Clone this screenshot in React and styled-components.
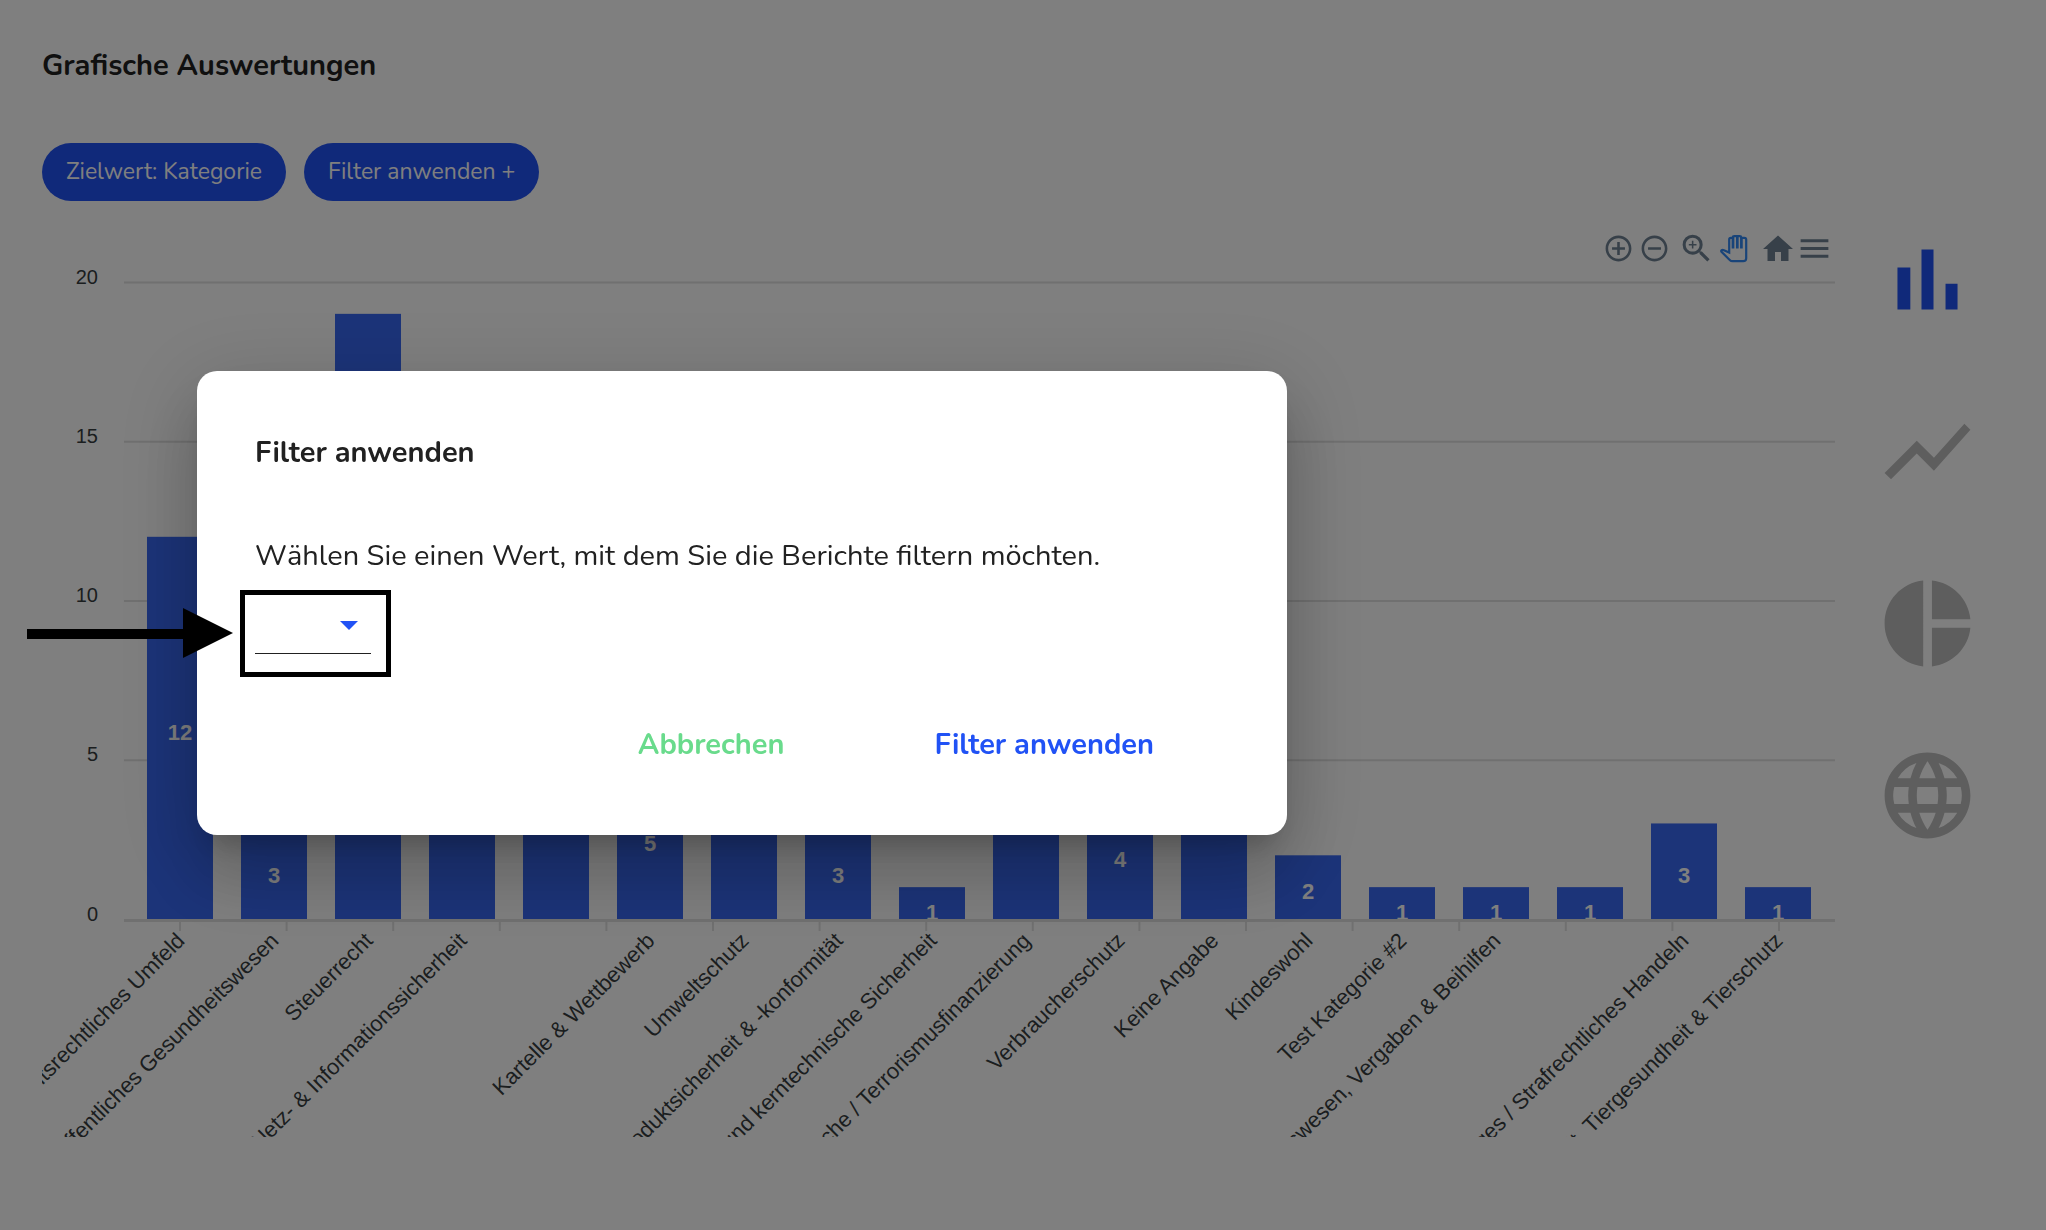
import React, { useState } from 'react';
import styled, { createGlobalStyle } from 'styled-components';
import {
  MdAddCircleOutline,
  MdHome,
  MdLanguage,
  MdMenu,
  MdPieChart,
  MdRemoveCircleOutline,
  MdShowChart,
  MdZoomIn,
} from 'react-icons/md';

const GlobalStyle = createGlobalStyle`
  * {
    box-sizing: border-box;
  }

  body {
    margin: 0;
    background: #ffffff;
    color: #212121;
    font-family: Nunito, 'Open Sans', sans-serif;
  }

  button,
  select {
    font-family: inherit;
  }
`;

const Page = styled.main`
  min-height: 100vh;
  padding: 46px 67px 40px 42px;
`;

const Heading = styled.h1`
  margin: 0;
  font-size: 29px;
  line-height: 40px;
  font-weight: 700;
`;

const ChipRow = styled.div`
  display: flex;
  gap: 18px;
  margin-top: 57px;
`;

const Chip = styled.button`
  height: 58px;
  padding: 0 24px 2px;
  border: none;
  border-radius: 29px;
  background: #2152f5;
  color: #ffffff;
  font-size: 23px;
  cursor: pointer;
`;

const Content = styled.div`
  display: flex;
  align-items: flex-start;
  gap: 32px;
  margin-top: 27px;
`;

const ChartColumn = styled.section`
  flex: 1;
  min-width: 0;
`;

const Toolbar = styled.div`
  display: flex;
  align-items: center;
  justify-content: flex-end;
  height: 41px;
  padding-right: 11px;
`;

const ToolButton = styled.button`
  display: flex;
  margin: 0 0 0 ${({ $space }) => $space || 0}px;
  padding: 0;
  border: none;
  background: none;
  color: ${({ $active }) => ($active ? '#3288f2' : '#6e8192')};
  cursor: pointer;
`;

const ChartSvg = styled.svg`
  display: block;
  width: 100%;
  overflow: hidden;
  font-family: Helvetica, 'Liberation Sans', Arial, sans-serif;
`;

const AxisText = styled.text`
  fill: #373d3f;
  font-size: ${({ $size }) => $size}px;
  text-anchor: end;
`;

const ValueText = styled.text`
  fill: #ffffff;
  font-size: 22px;
  font-weight: 600;
  text-anchor: middle;
`;

const ChartTypes = styled.nav`
  display: flex;
  flex-direction: column;
  gap: 69px;
`;

const TypeButton = styled.button`
  display: flex;
  padding: 0;
  border: none;
  background: none;
  color: ${({ $active }) => ($active ? '#2152f5' : '#bdbdbd')};
  cursor: pointer;
`;

const Backdrop = styled.div`
  position: fixed;
  inset: 0;
  padding: 371px 0 0 197px;
  background: rgba(0, 0, 0, 0.5);
`;

const Dialog = styled.div`
  width: 1090px;
  max-width: 100%;
  padding: 62px 58px 70px;
  border-radius: 20px;
  background: #ffffff;
  box-shadow:
    0 20px 27px -12px rgba(0, 0, 0, 0.2),
    0 43px 68px 5px rgba(0, 0, 0, 0.14),
    0 16px 82px 14px rgba(0, 0, 0, 0.12);
`;

const DialogTitle = styled.h2`
  margin: 0 0 63px;
  font-size: 29px;
  line-height: 40px;
  font-weight: 700;
`;

const DialogLabel = styled.label`
  display: block;
  font-size: 29px;
  line-height: 40px;
`;

const SelectField = styled.div`
  position: relative;
  width: 116px;
  margin-top: 24px;
`;

const Select = styled.select`
  display: block;
  width: 100%;
  height: 54px;
  padding: 0 32px 0 0;
  appearance: none;
  border: none;
  border-bottom: 1px solid #212121;
  border-radius: 0;
  background: transparent;
  font-size: 29px;
  outline: none;
`;

const Caret = styled.span`
  position: absolute;
  top: 21px;
  right: 13px;
  border: 9px solid transparent;
  border-top-color: #2152f5;
  border-bottom: none;
  pointer-events: none;
`;

const Marker = styled.div`
  position: absolute;
  inset: -10px -20px -23px -15px;
  border: 5px solid #000000;
  pointer-events: none;
`;

const Arrow = styled.svg`
  position: absolute;
  top: 8px;
  left: -228px;
  pointer-events: none;
`;

const Actions = styled.div`
  display: flex;
  justify-content: flex-end;
  margin-top: 71px;
`;

const ActionButton = styled.button`
  padding: 0 75px;
  border: none;
  background: none;
  color: ${({ $color }) => $color};
  font-size: 29px;
  line-height: 40px;
  font-weight: 700;
  cursor: pointer;
`;

const data = [
  { label: 'Arbeitsrechtliches Umfeld', value: 12 },
  { label: 'Öffentliches Gesundheitswesen', value: 3 },
  { label: 'Steuerrecht', value: 19 },
  { label: 'Netz- & Informationssicherheit', value: 8 },
  { label: '', value: 7 },
  { label: 'Kartelle & Wettbewerb', value: 5 },
  { label: 'Umweltschutz', value: 7 },
  { label: 'Produktsicherheit & -konformität', value: 3 },
  { label: 'Strahlenschutz und kerntechnische Sicherheit', value: 1 },
  { label: 'Geldwäsche / Terrorismusfinanzierung', value: 8 },
  { label: 'Verbraucherschutz', value: 4 },
  { label: 'Keine Angabe', value: 6 },
  { label: 'Kindeswohl', value: 2 },
  { label: 'Test Kategorie #2', value: 1 },
  { label: 'Öffentliches Auftragswesen, Vergaben & Beihilfen', value: 1 },
  { label: '', value: 1 },
  { label: 'Sonstiges / Strafrechtliches Handeln', value: 3 },
  { label: 'Lebensmittelsicherheit, Tiergesundheit & Tierschutz', value: 1 },
];

const PLOT = { left: 82, right: 1793, base: 650, unit: 31.85 };
const BAR = { start: 105, step: 94, width: 66 };
const LABEL_Y = 673;
const yTicks = [0, 5, 10, 15, 20];
const xTicks = Array.from({ length: 16 }, (_, i) => 138 + i * 106.6);

const BarChart = () => (
  <ChartSvg viewBox="0 0 1802 868" role="img" aria-label="Berichte nach Kategorie">
    {yTicks.map((tick) => {
      const y = PLOT.base - tick * PLOT.unit;
      return (
        <g key={tick}>
          {tick > 0 && (
            <line
              x1={PLOT.left}
              x2={PLOT.right}
              y1={y + 0.5}
              y2={y + 0.5}
              stroke="#e0e0e0"
              strokeWidth="2"
            />
          )}
          <AxisText $size={20} x="56" y={Math.floor(y) + 2}>
            {tick}
          </AxisText>
        </g>
      );
    })}
    {data.map(({ label, value }, i) => {
      const x = BAR.start + i * BAR.step;
      const center = x + BAR.width / 2;
      const labelX = center + 6;
      const height = value * PLOT.unit;
      // the value of the shortest bars stands on the axis
      const valueY = value === 1 ? PLOT.base + 1 : PLOT.base - height / 2 + 12;
      return (
        <g key={i}>
          <rect x={x} y={PLOT.base - height} width={BAR.width} height={height} fill="#3868f2" />
          <ValueText x={center} y={valueY}>
            {value}
          </ValueText>
          <AxisText
            $size={22}
            x={labelX}
            y={LABEL_Y}
            transform={`rotate(-45 ${labelX} ${LABEL_Y})`}
          >
            {label}
          </AxisText>
        </g>
      );
    })}
    <rect x={PLOT.left} y={PLOT.base} width={PLOT.right - PLOT.left} height="3" fill="#e0e0e0" />
    {xTicks.map((x) => (
      <line key={x} x1={x} x2={x} y1="653" y2="662" stroke="#e0e0e0" strokeWidth="2" />
    ))}
  </ChartSvg>
);

const BarIcon = () => (
  <svg width="103" height="103" viewBox="0 0 24 24" fill="currentColor">
    <path d="M5 9.2h3V19H5zM10.6 5h2.8v14h-2.8zm5.6 8H19v6h-2.8z" />
  </svg>
);

const PanIcon = () => (
  <svg width="28" height="28" viewBox="0 0 28 28" fill="none" stroke="currentColor">
    <path
      d="M9.2 17.6V4.4c0-1 .6-1.6 1.6-1.6h1.7c.2-1 .8-1.6 1.8-1.6h5.4c1 0 1.6.6 1.8 1.6h2.9c1.2 0 1.8.7 1.8 1.8v18.6c0 2-1 3-3 3H12.5c-1 0-1.8-.3-2.5-1l-8.5-8.4c-.8-1.2.6-2.4 2.4-1.6z"
      strokeWidth="2.2"
    />
    <path d="M13 2v11.6M17.3 1.5v12.1M21.4 2v11.6" strokeWidth="2.7" />
  </svg>
);

const FilterDialog = () => {
  const [filter, setFilter] = useState('');

  return (
    <Backdrop>
      <Dialog role="dialog" aria-modal="true" aria-labelledby="filter-title">
        <DialogTitle id="filter-title">Filter anwenden</DialogTitle>
        <DialogLabel htmlFor="filter-value">
          Wählen Sie einen Wert, mit dem Sie die Berichte filtern möchten.
        </DialogLabel>
        <SelectField>
          <Select
            id="filter-value"
            value={filter}
            onChange={(event) => setFilter(event.target.value)}
          >
            <option value="" />
          </Select>
          <Caret />
          <Marker />
          <Arrow width="206" height="50" viewBox="0 0 206 50">
            <path d="M0 21h156V0l50 25-50 25V31H0z" />
          </Arrow>
        </SelectField>
        <Actions>
          <ActionButton type="button" $color="#69db8c">
            Abbrechen
          </ActionButton>
          <ActionButton type="button" $color="#2152f5">
            Filter anwenden
          </ActionButton>
        </Actions>
      </Dialog>
    </Backdrop>
  );
};

const App = () => (
  <>
    <GlobalStyle />
    <Page>
      <Heading>Grafische Auswertungen</Heading>
      <ChipRow>
        <Chip type="button">Zielwert: Kategorie</Chip>
        <Chip type="button">Filter anwenden +</Chip>
      </ChipRow>
      <Content>
        <ChartColumn>
          <Toolbar>
            <ToolButton type="button" aria-label="Vergrößern">
              <MdAddCircleOutline size={31} />
            </ToolButton>
            <ToolButton type="button" aria-label="Verkleinern" $space={5}>
              <MdRemoveCircleOutline size={31} />
            </ToolButton>
            <ToolButton type="button" aria-label="Auswahl vergrößern" $space={8}>
              <MdZoomIn size={37} />
            </ToolButton>
            <ToolButton type="button" aria-label="Verschieben" $space={5} $active>
              <PanIcon />
            </ToolButton>
            <ToolButton type="button" aria-label="Zurücksetzen" $space={12}>
              <MdHome size={36} />
            </ToolButton>
            <ToolButton type="button" aria-label="Menü">
              <MdMenu size={37} />
            </ToolButton>
          </Toolbar>
          <BarChart />
        </ChartColumn>
        <ChartTypes aria-label="Diagrammtyp">
          <TypeButton type="button" aria-label="Balkendiagramm" $active>
            <BarIcon />
          </TypeButton>
          <TypeButton type="button" aria-label="Liniendiagramm">
            <MdShowChart size={103} />
          </TypeButton>
          <TypeButton type="button" aria-label="Kreisdiagramm">
            <MdPieChart size={103} />
          </TypeButton>
          <TypeButton type="button" aria-label="Weltkarte">
            <MdLanguage size={103} />
          </TypeButton>
        </ChartTypes>
      </Content>
    </Page>
    <FilterDialog />
  </>
);

export default App;
